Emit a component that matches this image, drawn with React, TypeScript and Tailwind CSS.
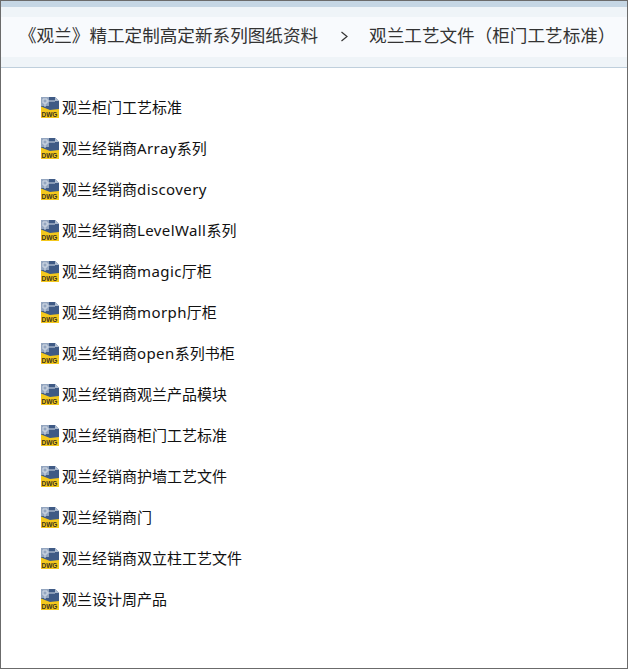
const items = [
  "观兰柜门工艺标准",
  "观兰经销商Array系列",
  "观兰经销商discovery",
  "观兰经销商LevelWall系列",
  "观兰经销商magic厅柜",
  "观兰经销商morph厅柜",
  "观兰经销商open系列书柜",
  "观兰经销商观兰产品模块",
  "观兰经销商柜门工艺标准",
  "观兰经销商护墙工艺文件",
  "观兰经销商门",
  "观兰经销商双立柱工艺文件",
  "观兰设计周产品",
];

function DwgIcon() {
  return (
    <svg width="21" height="22" viewBox="0 0 21 22" className="shrink-0">
      <path d="M1 0h14l4 4v17H1z" fill="#3f5a85" />
      <path d="M1 0h8v9H1z" fill="#93a5bf" />
      <path d="M3 2h4v4H3zM7 4h8M5 6v4" stroke="#d4dce7" strokeWidth="1" fill="none" />
      <path d="M15 0v4h4z" fill="#aebccf" />
      <path d="M1 9.5 10 13l9-1v9H1z" fill="#f4c81c" />
      <text x="1.5" y="20" fontSize="6.5" fontWeight="700" fill="#3a3320" fontFamily="Liberation Sans, sans-serif">DWG</text>
    </svg>
  );
}

function Label({ text }: { text: string }) {
  return (
    <span className="ml-[1px]">
      {text.split(/([A-Za-z]+)/).map((part, i) =>
        i % 2 === 1 ? (
          <span key={i} className="tracking-[0.4px]">
            {part}
          </span>
        ) : (
          part
        ),
      )}
    </span>
  );
}

export default function App() {
  return (
    <div className="h-[669px] w-[628px] overflow-hidden border border-[#6b6b6b] bg-white font-['Noto_Sans','Noto_Sans_CJK_SC',sans-serif]">
      <div className="h-[6px] bg-[#c5d6e4]" />
      <header className="h-[61px] border-b border-[#bfcfdc] bg-[#eff4f8] pt-[10px]">
        <div className="flex h-[40px] items-center whitespace-nowrap bg-[#f8fafd] pb-[2px] pl-[18px] text-[17.6px] leading-none text-[#333333]">
          <span>《观兰》精工定制高定新系列图纸资料</span>
          <svg width="9" height="11" viewBox="0 0 9 11" className="ml-[22px] shrink-0">
            <path d="M1.5 1 7 5.5 1.5 10" fill="none" stroke="#333333" strokeWidth="1.2" />
          </svg>
          <span className="ml-[20px]">观兰工艺文件（柜门工艺标准）</span>
        </div>
      </header>
      <ul className="flex flex-col pl-[39px] pt-[19px]">
        {items.map((t) => (
          <li key={t} className="flex h-[41px] items-center text-[15px] leading-none text-[#111111]">
            <DwgIcon />
            <Label text={t} />
          </li>
        ))}
      </ul>
    </div>
  );
}
